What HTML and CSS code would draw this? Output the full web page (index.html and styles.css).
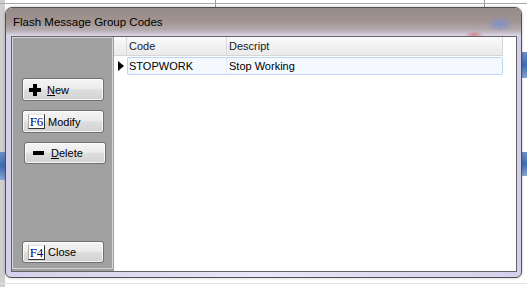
FILE: index.html
```html
<!DOCTYPE html>
<html>
<head>
    <title>Flash Message Group Codes</title>
    <link rel="stylesheet" href="styles.css">
</head>
<body>
    <div class="desktop">
        <div class="window">
            <div class="titlebar">Flash Message Group Codes</div>

            <div class="client">
                <div class="sidebar">
                    <div class="sidebar-inner">
                        <button class="btn">
                            <svg class="ico-plus" width="12" height="12" viewBox="0 0 12 12">
                                <rect x="4" y="0" width="4" height="12" fill="#000"/>
                                <rect x="0" y="4" width="12" height="4" fill="#000"/>
                            </svg>
                            <span><u>N</u>ew</span>
                        </button>
                        <button class="btn">
                            <span class="fkey">F6</span>
                            <span>Modify</span>
                        </button>
                        <button class="btn btn-delete">
                            <span class="ico-minus"></span>
                            <span><u>D</u>elete</span>
                        </button>
                        <button class="btn btn-close">
                            <span class="fkey">F4</span>
                            <span>Close</span>
                        </button>
                    </div>
                </div>

                <div class="grid">
                    <div class="grid-head">
                        <div class="cell c-ind"></div>
                        <div class="cell c-code">Code</div>
                        <div class="cell c-desc">Descript</div>
                    </div>
                    <div class="grid-row">
                        <div class="cell c-ind"><span class="pointer"></span></div>
                        <div class="row-box">
                            <div class="cell c-code">STOPWORK</div>
                            <div class="cell c-desc">Stop Working</div>
                        </div>
                    </div>
                </div>
            </div>
        </div>
    </div>
</body>
</html>
```

FILE: styles.css
```css
body {
    margin: 0;
    background-color: #fff;
    font-family: "Liberation Sans", Arial, sans-serif;
    font-size: 11px;
    color: #000;
}

/* stuff from the windows behind the dialog */
.desktop {
    width: 527px;
    height: 287px;
    overflow: hidden;
    box-sizing: border-box;
    padding: 7px 0 0 5px;
    background:
        linear-gradient(#a8a8a8, #a8a8a8) 0 3px / 527px 1px no-repeat,
        linear-gradient(#9c9c9c, #9c9c9c) 215px 0 / 1px 7px no-repeat,
        linear-gradient(#9c9c9c, #9c9c9c) 484px 0 / 1px 7px no-repeat,
        linear-gradient(#e4e4e4, #e4e4e4) 0 283px / 527px 1px no-repeat,
        linear-gradient(#6d8fc4, #3e6db4 50%, #8aa6d2) 0 152px / 5px 28px no-repeat,
        linear-gradient(#6d8fc4, #3e6db4 50%, #8aa6d2) 522px 52px / 5px 26px no-repeat,
        linear-gradient(#6d8fc4, #3e6db4 50%, #8aa6d2) 522px 152px / 5px 24px no-repeat,
        linear-gradient(#cfcfcf, #cfcfcf) 0 0 / 5px 287px no-repeat,
        #fff;
}

.window {
    width: 517px;
    height: 271px;
    box-sizing: border-box;
    border: 1px solid #505056;
    border-radius: 7px 7px 6px 6px;
    background: linear-gradient(to right, #d4d0ea, #e8e6f7 50%, #d4d0ea);
    display: flex;
    flex-direction: column;
    box-shadow: 0 0 3px rgba(0, 0, 0, 0.25);
}

.titlebar {
    height: 28px;
    line-height: 28px;
    padding-left: 7px;
    font-size: 11.5px;
    border-radius: 6px 6px 0 0;
    background:
        radial-gradient(ellipse 14px 8px at 494px 16px, rgba(110, 140, 220, 0.7), transparent),
        radial-gradient(ellipse 10px 4px at 468px 27px, rgba(210, 70, 70, 0.55), transparent),
        linear-gradient(#968b8a, #a0938f 45%, #b3aaad 78%, #dcd8ec);
}

.client {
    flex: 1;
    margin: 0 4px 5px 5px;
    border: 1px solid #646464;
    background-color: #fff;
    display: flex;
}

.sidebar {
    width: 102px;
    box-sizing: border-box;
    padding: 0 1px 2px 0;
    background-color: #a0a0a0;
}

.sidebar-inner {
    height: 100%;
    box-sizing: border-box;
    border: 1px solid #d4d4d4;
    padding: 40px 0 5px 9px;
    display: flex;
    flex-direction: column;
    align-items: flex-start;
    gap: 9px;
}

.btn {
    width: 82px;
    height: 23px;
    box-sizing: border-box;
    border: 1px solid #707070;
    border-radius: 3px;
    padding: 0 0 0 5px;
    background: linear-gradient(#f4f4f4, #ececec 45%, #dedede 52%, #d2d2d2);
    box-shadow: inset 0 0 0 1px rgba(255, 255, 255, 0.75);
    display: flex;
    align-items: center;
    font-family: "Liberation Sans", Arial, sans-serif;
    font-size: 11px;
    color: #000;
    cursor: pointer;
}

.btn-delete {
    height: 22px;
    margin-left: 2px;
}

.btn-close {
    height: 22px;
    margin-top: auto;
}

.ico-plus {
    margin: 0 6px 0 1px;
}

.ico-minus {
    width: 11px;
    height: 4px;
    margin: 0 7px 0 3px;
    background-color: #000;
}

.fkey {
    width: 17px;
    height: 15px;
    box-sizing: border-box;
    margin-right: 3px;
    border-left: 1px solid #a8a8a8;
    border-top: 1px solid #e2e2e2;
    border-right: 1px solid #333;
    border-bottom: 1px solid #333;
    background-color: #fff;
    color: #00007c;
    font-family: "Liberation Serif", "Times New Roman", serif;
    font-size: 13px;
    line-height: 13px;
    text-align: center;
}

.grid {
    flex: 1;
    background-color: #fff;
}

.grid-head {
    width: 389px;
    height: 19px;
    box-sizing: border-box;
    display: flex;
    background: linear-gradient(#fbfbfb, #f2f2f2 50%, #eaeaea);
    border-bottom: 1px solid #d6d6d6;
    border-right: 1px solid #d6d6d6;
    color: #1a1a1a;
}

.cell {
    box-sizing: border-box;
    line-height: 18px;
    padding-left: 2px;
    white-space: nowrap;
}

.c-ind {
    width: 13px;
    border-right: 1px solid #dadada;
    padding-left: 0;
}

.c-code {
    width: 100px;
    border-right: 1px solid #dadada;
}

.c-desc {
    flex: 1;
}

.grid-row {
    width: 389px;
    height: 18px;
    margin-top: 1px;
    display: flex;
}

.grid-row .c-ind {
    display: flex;
    align-items: center;
    justify-content: center;
    border-right: none;
}

.pointer {
    width: 0;
    height: 0;
    margin-left: 1px;
    border-left: 6px solid #000;
    border-top: 5px solid transparent;
    border-bottom: 5px solid transparent;
}

.row-box {
    flex: 1;
    display: flex;
    border: 1px solid #bcd5f2;
    border-radius: 2px;
    background-color: #f5f9fe;
}

.row-box .cell {
    line-height: 16px;
}

.row-box .c-code {
    width: 99px;
    border-right: 1px solid #e4ecf6;
    padding-left: 1px;
}
```
